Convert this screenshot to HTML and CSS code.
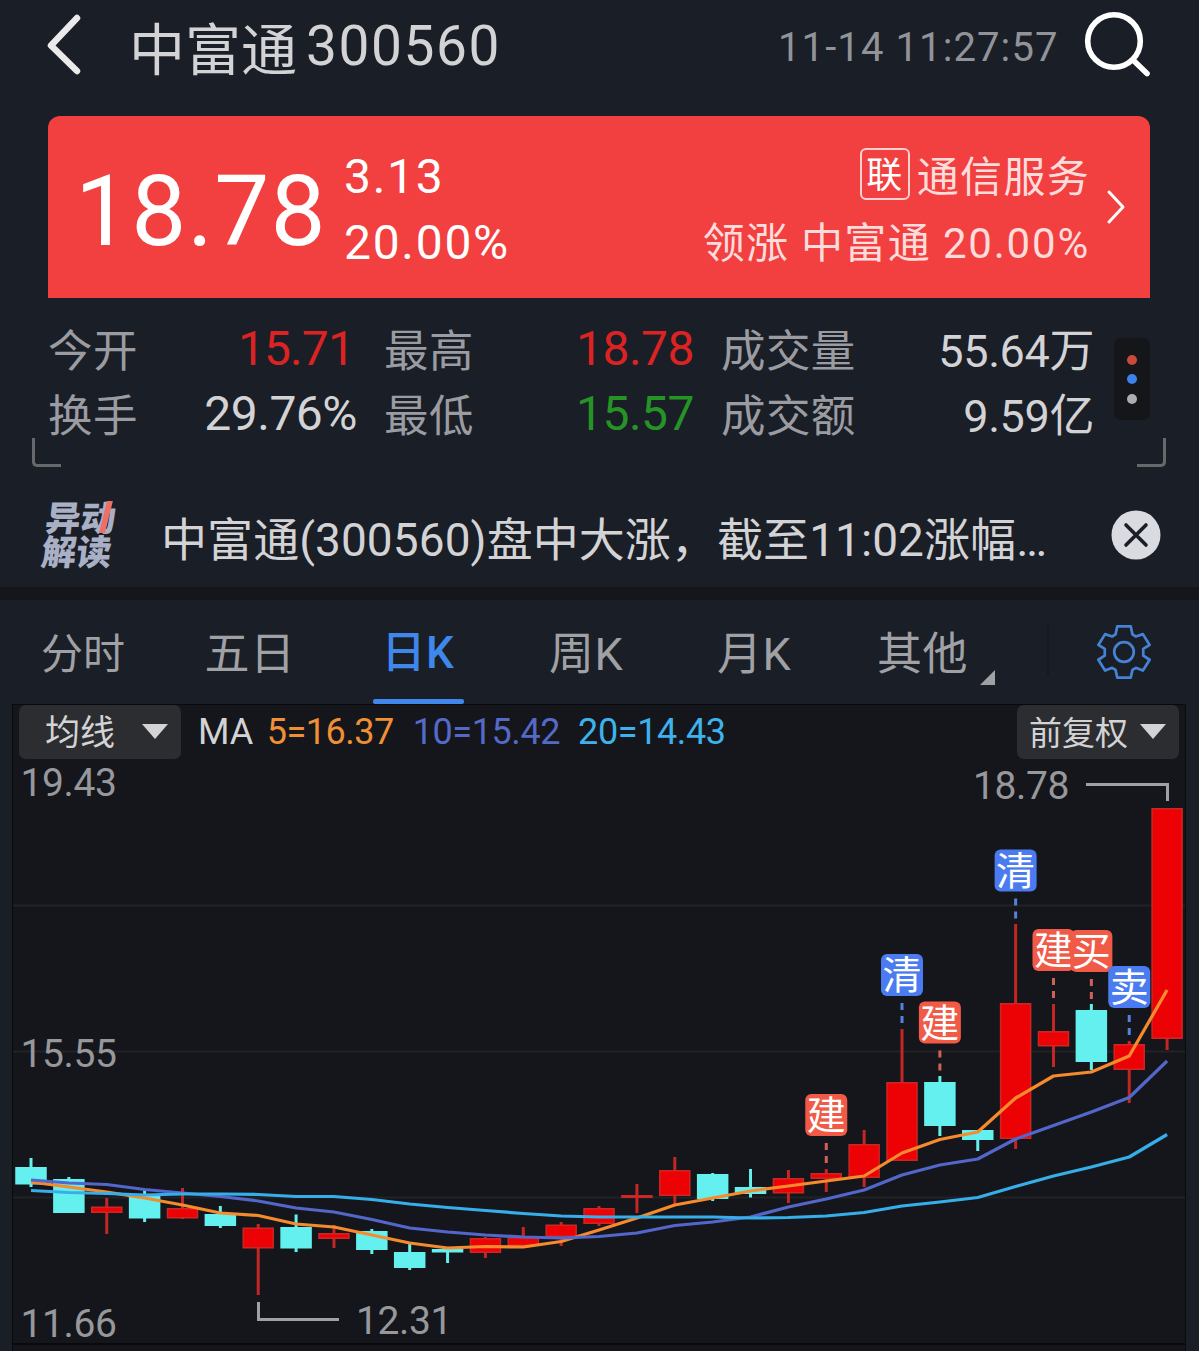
FILE: index.html
```html
<!DOCTYPE html>
<html lang="zh-CN">
<head>
<meta charset="utf-8">
<title>中富通 300560</title>
<link rel="stylesheet" href="styles.css">
</head>
<body>
<header class="topbar">
  <svg class="back" viewBox="0 0 36 64" aria-hidden="true"><path d="M30 5 4 32.500 30 58"/></svg>
  <h1 class="title"><span class="title-name">中富通</span><span class="title-code">300560</span></h1>
  <time class="clock">11-14 11:27:57</time>
  <svg class="search" viewBox="0 0 66 66" aria-hidden="true"><circle cx="30" cy="30" r="26.300"/><path d="M49 49 63 62.500"/></svg>
</header>

<section class="quote">
  <strong class="price">18.78</strong>
  <div class="change"><span>3.13</span><span>20.00%</span></div>
  <div class="sector">
    <div class="sector-line"><span class="tag">联</span><span>通信服务</span></div>
    <div class="sector-line"><span class="leader">领涨 中富通</span><span class="leader-rate">20.00%</span></div>
  </div>
  <svg class="more" viewBox="0 0 20 36" aria-hidden="true"><path d="M3 3 17 18 3 33"/></svg>
</section>

<section class="stats">
  <i class="corner corner-left"></i>
  <div class="stat-grid">
    <div class="stat"><span class="label">今开</span><span class="num up open">15.71</span></div>
    <div class="stat"><span class="label">最高</span><span class="num up">18.78</span></div>
    <div class="stat"><span class="label">成交量</span><span class="num unit">55.64万</span></div>
    <div class="stat"><span class="label">换手</span><span class="num">29.76%</span></div>
    <div class="stat"><span class="label">最低</span><span class="num down">15.57</span></div>
    <div class="stat"><span class="label">成交额</span><span class="num unit">9.59亿</span></div>
  </div>
  <div class="dots"><i class="dot red"></i><i class="dot blue"></i><i class="dot"></i></div>
  <i class="corner corner-right"></i>
</section>

<section class="news">
  <div class="news-logo"><span>异<b class="move">动</b></span><span>解读</span></div>
  <p class="news-text">中富通(300560)盘中大涨，截至11:02涨幅…</p>
  <svg class="close" viewBox="0 0 50 50" aria-hidden="true"><circle cx="25" cy="25" r="24.500"/><path d="M15 15 35 35M35 15 15 35"/></svg>
</section>

<nav class="tabs">
  <a class="tab tab-small">分时</a>
  <a class="tab">五日</a>
  <a class="tab active">日K</a>
  <a class="tab">周K</a>
  <a class="tab">月K</a>
  <a class="tab other">其他<i class="fold"></i></a>
  <i class="divider"></i>
  <svg class="gear" viewBox="52 46 160 160" aria-hidden="true"><path d="M112 50H152L157 74 167 80 188 73 208 105 189 117V137L208 149 188 181 167 173 157 179 152 202H112L107 179 97 173 76 181 56 149 75 137V117L56 105 76 73 97 80 107 74Z"/><circle cx="132" cy="126" r="29"/></svg>
</nav>

<main class="chart">
  <div class="legend">
    <button class="pick pick-ma">均线<i class="caret"></i></button>
    <span class="ma">MA</span>
    <span class="ma ma5">5=16.37</span>
    <span class="ma ma10">10=15.42</span>
    <span class="ma ma20">20=14.43</span>
    <button class="pick pick-adj">前复权<i class="caret"></i></button>
  </div>
  <svg class="plot" viewBox="13 759 1172 584">
    <path class="grid" d="M13 905.500H1185M13 1051.500H1185M13 1197.500H1185"/>
    <g id="candles"></g>
    <g id="averages"></g>
    <g class="axis">
      <text x="20.500" y="796">19.43</text>
      <text x="20.500" y="1067">15.55</text>
      <text x="20.500" y="1337">11.66</text>
      <text x="973" y="799">18.78</text>
      <text x="356" y="1334">12.31</text>
    </g>
    <path class="pointer" d="M1086 784.500H1167.500V801M258.500 1302V1319.500H339"/>
    <g id="signals"></g>
  </svg>
</main>
<script src="chart.js"></script>
</body>
</html>
```
FILE: styles.css
```css
* { box-sizing: border-box; }
body {
  margin: 0;
  width: 1199px;
  height: 1351px;
  overflow: hidden;
  display: flex;
  flex-direction: column;
  background: #1a1e26;
  color: #d3d3d5;
  font-family: Roboto, "Noto Sans CJK SC", sans-serif;
}
svg { display: block; flex: none; fill: none; stroke-linecap: round; stroke-linejoin: round; }

.topbar { height: 116px; display: flex; align-items: flex-start; padding-left: 47px; }
.back { width: 36px; height: 64px; margin-top: 13px; stroke: #eaeaea; stroke-width: 6.5; }
.title { margin: 0 0 0 46px; display: flex; font-size: 55px; font-weight: 400; line-height: 92px; width: 649px; }
.title-name { padding-top: 5px; font-size: 56px; }
.title-code { letter-spacing: 1.6px; margin-left: 9px; }
.clock { font-size: 40px; line-height: 95px; color: #929398; letter-spacing: 1.1px; width: 306px; }
.search { width: 66px; height: 66px; margin-top: 11px; stroke: #fff; stroke-width: 5.6; }

.quote {
  height: 182px;
  margin: 0 49px 0 48px;
  padding-left: 27px;
  display: flex;
  align-items: flex-start;
  border-radius: 12px 12px 0 0;
  background: #f24040;
  color: #fff;
}
.price { font-size: 98px; font-weight: 400; line-height: 191px; letter-spacing: 1.1px; width: 269px; }
.change { display: flex; flex-direction: column; padding-top: 28px; font-size: 48px; line-height: 66px; letter-spacing: 1.7px; }
.sector { margin-left: auto; padding-top: 29px; font-size: 42px; line-height: 68px; letter-spacing: 1.3px; color: #ffdcdc; }
.sector-line { display: flex; justify-content: flex-end; align-items: center; height: 66px; }
.tag { width: 50px; height: 52px; margin: 0 7px 8px 0; border: 2px solid #ffd0d0; border-radius: 6px; font-size: 36px; line-height: 53px; letter-spacing: 0; text-indent: -1px; text-align: center; color: #fff; }
.leader-rate { margin-left: 12px; letter-spacing: 1.8px; }
.more { width: 20px; height: 36px; margin: 73px 24px 0 16px; stroke: #fff; stroke-width: 3; }

.stats { height: 190px; display: flex; padding: 20px 33px 0 32px; }
.corner { width: 29px; height: 29px; margin-top: 120px; border: solid #67686c; flex: none; }
.corner-left { border-width: 0 0 3px 3px; border-radius: 0 0 0 5px; }
.corner-right { border-width: 0 3px 3px 0; border-radius: 0 0 5px 0; margin-left: -13px; }
.stat-grid { display: grid; grid-template-columns: 309px 310px 373px; grid-template-rows: 65px 65px; column-gap: 27px; margin-left: -13px; flex: none; }
.stat { display: flex; justify-content: space-between; line-height: 68px; }
.label { font-size: 44.500px; letter-spacing: .4px; color: #9b9ca1; }
.num { font-size: 48px; line-height: 62px; letter-spacing: -.5px; }
.open { letter-spacing: -.9px; padding-right: 3px; }
.unit { font-size: 45px; line-height: 67px; letter-spacing: -.4px; }
.up { color: #dc2323; }
.down { color: #259325; }
.dots { width: 36px; height: 82px; margin: 20px 0 0 20px; border-radius: 7px; background: #15161a; display: flex; flex-direction: column; align-items: center; justify-content: center; gap: 9.500px; flex: none; }
.dot { width: 10px; height: 10px; border-radius: 50%; background: #adadb1; }
.dot.red { background: #c94a38; }
.dot.blue { background: #3c82ec; }

.news { height: 99px; display: flex; align-items: flex-start; }
.news-logo { width: 72px; margin: 11px 5px 0 44px; transform: skewX(-7deg); display: flex; flex-direction: column; font-family: "Noto Sans CJK SC", sans-serif; font-size: 35px; line-height: 34px; font-weight: 900; color: #a9b0c5; white-space: nowrap; }
.move { position: relative; font-weight: inherit; }
.move::after { content: ""; position: absolute; left: 22px; top: 11px; width: 6px; height: 32px; background: #f06f65; transform: skewX(-7deg); }
.news-text { margin: 0 0 0 40px; width: 950px; font-size: 46px; line-height: 105px; letter-spacing: .07px; white-space: nowrap; }
.close { width: 50px; height: 50px; margin-top: 22px; }
.close circle { fill: #d9dbe1; }
.close path { stroke: #1a1e26; stroke-width: 3.6; }

.tabs { height: 117px; border-top: 13px solid #15161b; display: flex; align-items: flex-start; flex: none; }
.tab { width: 168px; height: 104px; text-align: center; font-size: 45px; line-height: 110px; letter-spacing: .5px; color: #a0a1a5; }
.tab-small { font-size: 42px; width: 166px; letter-spacing: 0; }
.active { color: #3f87ea; font-weight: 500; font-size: 44px; line-height: 106px; display: flex; flex-direction: column; align-items: center; }
.active::after { content: ""; width: 91px; height: 5px; border-radius: 2px; background: #3f87ea; margin-top: -7px; }
.other { display: flex; padding-left: 39px; }
.fold { width: 15px; height: 15px; margin: 70px 0 0 12px; background: #a0a1a5; clip-path: polygon(100% 0, 100% 100%, 0 100%); }
.divider { width: 2px; height: 50px; margin: 26px 0 0 41px; background: #151920; }
.gear { width: 54px; height: 54px; margin: 25px 0 0 48px; stroke: #4682d6; stroke-width: 8; }

.chart { height: 647px; margin: 0 13px 0 12px; border: 1px solid #090a0d; border-bottom: 0; background: #15161b; flex: none; }
.legend { height: 54px; display: flex; padding-left: 6px; padding-right: 6px; line-height: 54px; }
.pick { display: flex; align-items: center; width: 162px; height: 54px; border: 0; border-radius: 7px; background: #2c2d31; color: #d3d3d5; font: 35px/57px Roboto, "Noto Sans CJK SC", sans-serif; }
.pick-ma { padding: 2px 13px 0 26px; justify-content: space-between; margin-right: 17px; }
.pick-adj { padding: 2px 13px 0 12px; justify-content: space-between; margin-left: auto; font-size: 33px; }
.caret { width: 26px; height: 15px; margin-top: -3px; background: #d3d3d5; clip-path: polygon(0 0, 100% 0, 50% 100%); }
.ma { font-size: 36px; margin-right: 13.5px; line-height: 54px; }
.ma5 { color: #f09035; letter-spacing: -.5px; margin-right: 19px; }
.ma10 { color: #5569c6; letter-spacing: -.4px; margin-right: 18px; }
.ma20 { color: #3db2ec; letter-spacing: -.4px; }
.plot { width: 1172px; height: 586px; overflow: visible; border-bottom: 2px solid #090a0d; stroke-linecap: butt; stroke-linejoin: miter; }
.grid { stroke: #202227; stroke-width: 2; }
.axis { font-size: 39px; letter-spacing: -.4px; fill: #97989c; }
.pointer { stroke: #a0a1a5; stroke-width: 3; }
.rise { fill: #ec0205; stroke: #cc2724; stroke-width: 1.5; }
.fall { fill: #64f0ee; }
.wick { stroke-width: 3; }
.wick-rise { stroke: #c42623; }
.wick-fall { stroke: #64f0ee; }
.line { stroke-width: 3.2; stroke-linejoin: round; }
.line5 { stroke: #f68b2e; }
.line10 { stroke: #5366ca; }
.line20 { stroke: #36aeea; }
.buy { fill: #f05a47; }
.sell { fill: #4a7bf0; }
.stem { stroke-width: 3; stroke-dasharray: 7 6; }
.stem-buy { stroke: #cf6255; }
.stem-sell { stroke: #5480df; }
.signal-text { font: 39px "Noto Sans CJK SC", sans-serif; fill: #fff; text-anchor: middle; }
```
FILE: chart.js
```js
// Each candle: [rising, body top, body bottom, wick top, wick bottom]
const candles = [
  [0,1167,1184.5,1158,1187],[0,1179,1213,1177,1213],[1,1206.5,1213,1198,1234],
  [0,1196,1218.5,1190,1222],[1,1208,1218.5,1188,1219],[0,1214,1226,1206,1228],
  [1,1227.5,1248.5,1224,1295],[0,1227,1248.5,1214.5,1252],[1,1233,1239,1225,1248],
  [0,1231,1250,1229,1254],[0,1252,1268,1244,1270],[0,1249,1252.5,1247,1263],
  [1,1238,1253,1237,1258],[1,1237,1246,1227,1246],[1,1224.5,1237,1222,1246],
  [1,1208,1224,1206,1226],[1,1195,1198,1184,1213],[1,1170,1196,1157,1206],
  [0,1174,1199,1173,1201],[0,1187,1194,1169,1197.5],[1,1178,1193.5,1170,1203],
  [1,1173,1179,1169,1192],[1,1144,1178,1130,1187],[1,1082,1161,1029,1161],
  [0,1082,1126,1076,1136],[0,1130,1140,1130,1151],[1,1003,1139,924,1149],
  [1,1031,1046.5,1004,1067],[0,1010,1062,1004,1070],[1,1044,1070,1041,1103],
  [1,808,1039,808,1050]
];
const averages = {
  line5: [1182,1187,1192,1198,1205,1213,1215.5,1224,1227,1235,1243,1248,1246.5,1247,1241.5,1230,1218,1205,1198,1191,1186,1181,1176,1153,1139.5,1132,1098,1076,1072,1056,990],
  line10: [1180,1183,1184.5,1189.5,1193,1196.5,1201,1208,1212,1219.5,1228,1232,1235,1237,1238,1236.5,1233,1225.5,1222,1217,1207,1199,1190,1175,1165,1159,1139,1125.5,1112,1097.5,1061],
  line20: [1190.5,1192.5,1193.5,1195,1194,1194,1194.5,1196.5,1196.5,1199.5,1204,1207.5,1210.5,1213.5,1216,1217,1217,1217,1217,1218,1217.5,1216,1212.5,1206,1202,1197.5,1186.5,1176,1167,1157,1134.5]
};
// Each signal: [candle index, text, kind, badge top]
const signals = [
  [21,'建','buy',1094],[23,'清','sell',954],[24,'建','buy',1001.5],
  [26,'清','sell',849.5],[27,'建','buy',929],[28,'买','buy',930],[29,'卖','sell',966]
];
const x = i => 31 + i * 37.87;

document.getElementById('candles').innerHTML = candles.map(([up, top, bottom, high, low], i) => {
  const kind = up ? 'rise' : 'fall';
  const inset = up ? 0.75 : 0;
  return `<path class="wick wick-${kind}" d="M${x(i)} ${high}V${low}"/>` +
    `<rect class="${kind}" x="${x(i) - 15.75 + inset}" y="${top + inset}" width="${31.5 - 2 * inset}" height="${bottom - top - 2 * inset}"/>`;
}).join('');

document.getElementById('averages').innerHTML = Object.entries(averages).map(([name, ys]) =>
  `<polyline class="line ${name}" points="${ys.map((y, i) => x(i) + ',' + y).join(' ')}"/>`
).join('');

document.getElementById('signals').innerHTML = signals.map(([i, text, kind, top]) =>
  `<path class="stem stem-${kind}" d="M${x(i)} ${top + 49}v20"/>` +
  `<rect class="${kind}" x="${x(i) - 21}" y="${top}" width="42" height="42" rx="6"/>` +
  `<text class="signal-text" x="${x(i)}" y="${top + 35}">${text}</text>`
).join('');
```
